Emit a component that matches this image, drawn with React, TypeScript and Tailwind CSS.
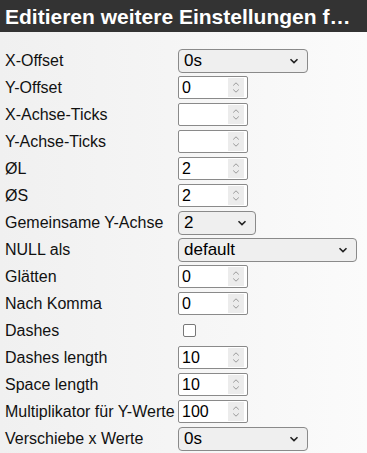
import React from 'react';

type Row =
  | { label: string; kind: 'select'; value: string; width: string }
  | { label: string; kind: 'number'; value: string }
  | { label: string; kind: 'check' };

const ROWS: Row[] = [
  { label: 'X-Offset', kind: 'select', value: '0s', width: 'w-[130px]' },
  { label: 'Y-Offset', kind: 'number', value: '0' },
  { label: 'X-Achse-Ticks', kind: 'number', value: '' },
  { label: 'Y-Achse-Ticks', kind: 'number', value: '' },
  { label: 'ØL', kind: 'number', value: '2' },
  { label: 'ØS', kind: 'number', value: '2' },
  { label: 'Gemeinsame Y-Achse', kind: 'select', value: '2', width: 'w-[78px]' },
  { label: 'NULL als', kind: 'select', value: 'default', width: 'w-[179px]' },
  { label: 'Glätten', kind: 'number', value: '0' },
  { label: 'Nach Komma', kind: 'number', value: '0' },
  { label: 'Dashes', kind: 'check' },
  { label: 'Dashes length', kind: 'number', value: '10' },
  { label: 'Space length', kind: 'number', value: '10' },
  { label: 'Multiplikator für Y-Werte', kind: 'number', value: '100' },
  { label: 'Verschiebe x Werte', kind: 'select', value: '0s', width: 'w-[130px]' },
];

function Chevron() {
  return (
    <svg width="10" height="6" viewBox="0 0 10 6" className="shrink-0">
      <path d="M1.5 1.2 L5 4.6 L8.5 1.2" fill="none" stroke="#222" strokeWidth="1.6" />
    </svg>
  );
}

function Spin() {
  return (
    <span className="flex h-[19px] w-[16px] items-center justify-center bg-[#ececec]">
      <svg width="8" height="13" viewBox="0 0 8 13">
        <path d="M1.2 4.5 L4 1.8 L6.8 4.5 M1.2 8.5 L4 11.2 L6.8 8.5" fill="none" stroke="#9a9a9a" strokeWidth="1" />
      </svg>
    </span>
  );
}

function Field({ row }: { row: Row }) {
  if (row.kind === 'select') {
    return (
      <div
        className={`flex h-[24px] ${row.width} items-center justify-between rounded-[4px] border border-[#8a8a8a] bg-[#efefef] pl-[5px] pr-[8px] text-[17px] text-black`}
      >
        <span>{row.value}</span>
        <Chevron />
      </div>
    );
  }
  if (row.kind === 'number') {
    return (
      <div className="flex h-[23px] w-[70px] items-center justify-between rounded-[2px] border border-[#8a8a8a] bg-white pl-[3px] pr-[3px] text-[16px] text-black">
        <span>{row.value}</span>
        <Spin />
      </div>
    );
  }
  return (
    <div className="flex h-[23px] items-center pl-[5px]">
      <span className="h-[13px] w-[13px] rounded-[2px] border-[1.5px] border-[#777] bg-white" />
    </div>
  );
}

export default function App() {
  return (
    <div className="h-[453px] w-[367px] overflow-hidden bg-gradient-to-r from-[#f0f0f0] to-[#fbfbfb] font-['Liberation_Sans',Arial,sans-serif]">
      <div className="flex h-[32px] items-center bg-[#333333] px-[5px]">
        <h1 className="whitespace-nowrap text-[21px] font-bold leading-none text-white">
          Editieren weitere Einstellungen f…
        </h1>
      </div>
      <div className="pt-[15px]">
        {ROWS.map((row) => (
          <div key={row.label} className="flex h-[27px] items-center">
            <div className="w-[178px] shrink-0 whitespace-nowrap pl-[5px] text-[16px] text-[#111]">
              {row.label}
            </div>
            <Field row={row} />
          </div>
        ))}
      </div>
    </div>
  );
}
